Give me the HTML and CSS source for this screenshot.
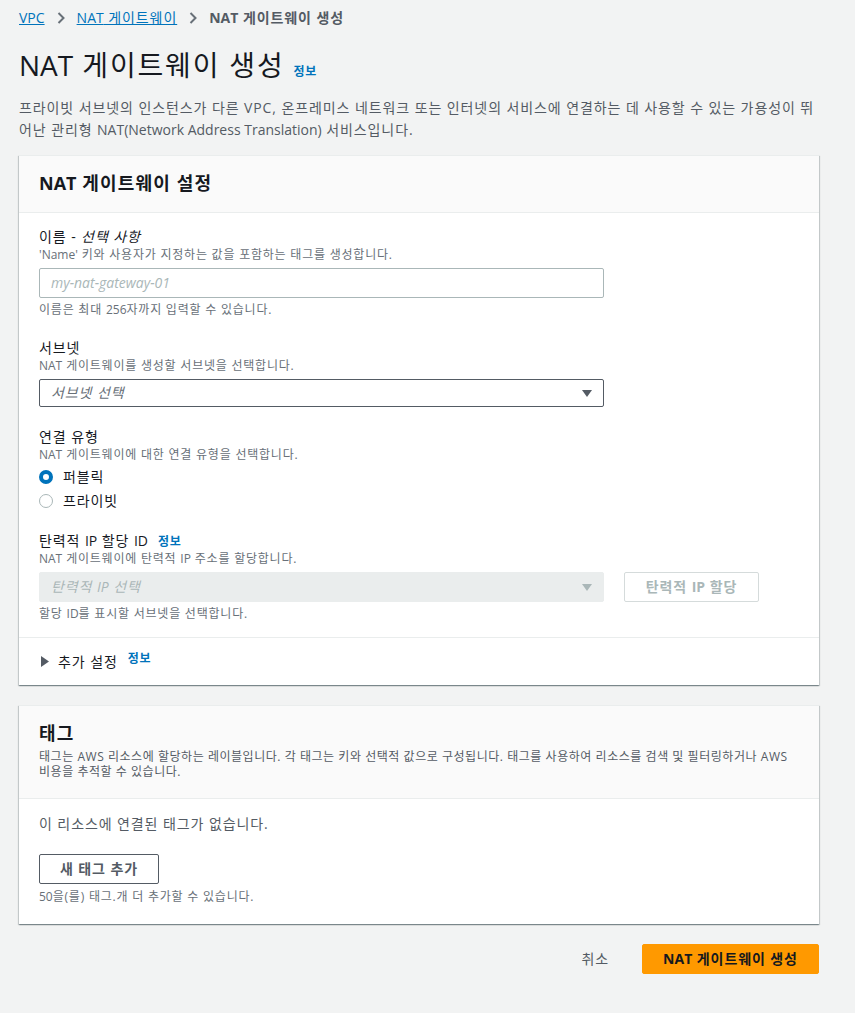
FILE: index.html
```html
<!DOCTYPE html>
<html lang="ko">
<head>
<meta charset="utf-8">
<title>NAT 게이트웨이 생성</title>
<link rel="stylesheet" href="styles.css">
</head>
<body>
<div class="page">
  <nav class="breadcrumb">
    <a class="crumb-link" href="#"><span class="en">VPC</span></a>
    <svg class="crumb-sep" width="8" height="12" viewBox="0 0 8 12"><polyline points="1.5,1 6.5,6 1.5,11" fill="none" stroke="#687078" stroke-width="2"/></svg>
    <a class="crumb-link" href="#"><span class="en">NAT</span> 게이트웨이</a>
    <svg class="crumb-sep" width="8" height="12" viewBox="0 0 8 12"><polyline points="1.5,1 6.5,6 1.5,11" fill="none" stroke="#687078" stroke-width="2"/></svg>
    <span class="crumb-current"><span class="en">NAT</span> 게이트웨이 생성</span>
  </nav>

  <header class="page-header">
    <h1 class="page-title"><span class="en">NAT</span> 게이트웨이 생성<a class="info-link info-title" href="#">정보</a></h1>
    <p class="page-desc"><span class="desc-run">프라이빗 서브넷의 인스턴스가 다른 VPC, 온프레미스 네트워크 또는 인터넷의 서비스에 연결하는 데 사용할 수 있는 가용성이 뛰</span><span class="desc-run">어난 관리형 </span><span class="en">NAT(Network Address Translation)</span><span class="desc-run"> 서비스입니다.</span></p>
  </header>

  <section class="card">
    <div class="card-header">
      <h2 class="card-title"><span class="en">NAT</span> 게이트웨이 설정</h2>
    </div>
    <div class="card-body settings-body">
      <div class="field">
        <div class="label">이름 - <i>선택 사항</i></div>
        <div class="desc"><span class="en">'Name'</span> 키와 사용자가 지정하는 값을 포함하는 태그를 생성합니다.</div>
        <div class="input"><span class="placeholder en">my-nat-gateway-01</span></div>
        <div class="hint">이름은 최대 <span class="en">256</span>자까지 입력할 수 있습니다.</div>
      </div>

      <div class="field">
        <div class="label">서브넷</div>
        <div class="desc"><span class="en">NAT</span> 게이트웨이를 생성할 서브넷을 선택합니다.</div>
        <div class="select select-subnet">
          <span class="placeholder">서브넷 선택</span>
          <svg class="caret" width="10" height="7" viewBox="0 0 10 7"><polygon points="0,0 10,0 5,7" fill="#545b64"/></svg>
        </div>
      </div>

      <div class="field">
        <div class="label">연결 유형</div>
        <div class="desc"><span class="en">NAT</span> 게이트웨이에 대한 연결 유형을 선택합니다.</div>
        <div class="radio-group">
          <div class="radio-row"><span class="radio radio-on"></span><span class="radio-label">퍼블릭</span></div>
          <div class="radio-row"><span class="radio"></span><span class="radio-label">프라이빗</span></div>
        </div>
      </div>

      <div class="field">
        <div class="label">탄력적 <span class="en">IP</span> 할당 <span class="en">ID</span><a class="info-link info-label" href="#">정보</a></div>
        <div class="desc"><span class="en">NAT</span> 게이트웨이에 탄력적 <span class="en">IP</span> 주소를 할당합니다.</div>
        <div class="eip-row">
          <div class="select select-disabled">
            <span class="placeholder">탄력적 <span class="en">IP</span> 선택</span>
            <svg class="caret" width="10" height="7" viewBox="0 0 10 7"><polygon points="0,0 10,0 5,7" fill="#aab7b8"/></svg>
          </div>
          <button class="btn btn-disabled" type="button">탄력적 <span class="en">IP</span> 할당</button>
        </div>
        <div class="hint">할당 <span class="en">ID</span>를 표시할 서브넷을 선택합니다.</div>
      </div>
    </div>
    <div class="expander">
      <svg class="expander-icon" width="8" height="11" viewBox="0 0 8 11"><polygon points="0,0 8,5.5 0,11" fill="#545b64"/></svg>
      <span class="expander-title">추가 설정</span>
      <a class="info-link info-expander" href="#">정보</a>
    </div>
  </section>

  <section class="card card-tags">
    <div class="card-header tags-header">
      <h2 class="card-title">태그</h2>
      <p class="header-desc">태그는 AWS 리소스에 할당하는 레이블입니다. 각 태그는 키와 선택적 값으로 구성됩니다. 태그를 사용하여 리소스를 검색 및 필터링하거나 AWS 비용을 추적할 수 있습니다.</p>
    </div>
    <div class="card-body tags-body">
      <p class="empty-text">이 리소스에 연결된 태그가 없습니다.</p>
      <button class="btn btn-normal" type="button">새 태그 추가</button>
      <div class="hint hint-tags"><span class="en">50</span>을(를) 태그.개 더 추가할 수 있습니다.</div>
    </div>
  </section>

  <div class="actions">
    <button class="btn btn-link" type="button">취소</button>
    <button class="btn btn-primary" type="button"><span class="en">NAT</span> 게이트웨이 생성</button>
  </div>
</div>
</body>
</html>
```

FILE: styles.css
```css
* {
  box-sizing: border-box;
  letter-spacing: 0.065em;
}
.en { letter-spacing: 0; }

body {
  margin: 0;
  background: #f2f3f3;
  color: #16191f;
  font-family: "Open Sans", "Noto Sans CJK KR", sans-serif;
  font-size: 14px;
  line-height: 20px;
}

.page {
  width: 800px;
  margin-left: 19px;
  padding-top: 8px;
  padding-bottom: 38px;
}

/* breadcrumb */
.breadcrumb {
  display: flex;
  align-items: center;
  gap: 12px;
  height: 20px;
  font-size: 14px;
  line-height: 20px;
}
.crumb-link {
  color: #0073bb;
  text-decoration: underline;
}
.crumb-sep { display: block; }
.crumb-current {
  color: #545b64;
  font-weight: 700;
}

/* header */
.page-header { margin-top: 19px; }
.page-title {
  margin: 0;
  font-size: 28px;
  line-height: 36px;
  font-weight: 400;
  color: #16191f;
}
.info-link {
  color: #0073bb;
  font-size: 12px;
  line-height: 16px;
  font-weight: 700;
  text-decoration: none;
}
.info-title { margin-left: 9px; }
.page-desc {
  margin: 14px 0 0;
  color: #545b64;
  font-size: 14px;
  line-height: 22px;
}

/* cards */
.card {
  margin-top: 14px;
  background: #ffffff;
  border-top: 1px solid #eaeded;
  box-shadow: 0 1px 1px 0 rgba(0, 28, 36, 0.3), 1px 1px 1px 0 rgba(0, 28, 36, 0.15), -1px 1px 1px 0 rgba(0, 28, 36, 0.15);
}
.card-tags { margin-top: 20px; }
.card-header {
  background: #fafafa;
  border-bottom: 1px solid #eaeded;
  padding: 15px 20px 17px;
}
.card-title {
  margin: 0;
  font-size: 18px;
  line-height: 24px;
  font-weight: 700;
  color: #16191f;
}
.card-body { padding: 0 20px; }
.settings-body {
  padding-top: 14px;
  padding-bottom: 15px;
  border-bottom: 1px solid #eaeded;
}

/* fields */
.field { display: flex; flex-direction: column; align-items: flex-start; }
.field + .field { margin-top: 20px; }
.label {
  font-size: 14px;
  line-height: 20px;
  color: #16191f;
}
.label i { font-style: italic; }
.info-label { margin-left: 10px; }
.desc, .hint {
  font-size: 12px;
  line-height: 16px;
  color: #687078;
}
.hint { margin-top: 4px; }

.input, .select {
  margin-top: 5px;
  width: 565px;
  height: 30px;
  display: flex;
  align-items: center;
  padding: 0 11px;
  border: 1px solid #aab7b8;
  border-radius: 2px;
  background: #ffffff;
}
.placeholder {
  color: #aab7b8;
  font-style: italic;
  flex: 1;
}
.select { border-color: #545b64; }
.select .placeholder { color: #687078; }
.select-subnet { height: 28px; }
.caret { display: block; }
.select-disabled {
  margin-top: 0;
  background: #eaeded;
  border-color: #eaeded;
}
.select-disabled .placeholder { color: #aab7b8; }

.radio-group {
  margin-top: 4px;
  display: flex;
  flex-direction: column;
  gap: 4px;
}
.radio-row {
  display: flex;
  align-items: center;
  gap: 10px;
  height: 20px;
}
.radio {
  width: 14px;
  height: 14px;
  border-radius: 50%;
  border: 1px solid #aab7b8;
  background: #ffffff;
}
.radio-on { border: 4px solid #0073bb; }
.radio-label { color: #16191f; }

.eip-row {
  margin-top: 5px;
  display: flex;
  align-items: center;
  gap: 20px;
}

/* buttons */
.btn {
  font-family: inherit;
  font-size: 14px;
  line-height: 20px;
  height: 30px;
  padding: 0 20px;
  border-radius: 2px;
  font-weight: 700;
  cursor: pointer;
}
.btn-disabled {
  background: #ffffff;
  border: 1px solid #d5dbdb;
  color: #aab7b8;
  width: 135px;
  padding: 0;
}
.btn-normal {
  background: #ffffff;
  border: 1px solid #545b64;
  color: #545b64;
  width: 120px;
  padding: 0;
  margin-top: 20px;
}
.btn-link {
  background: transparent;
  border: 1px solid transparent;
  color: #545b64;
  font-weight: 400;
}
.btn-primary {
  background: #ff9900;
  border: 1px solid #ff9900;
  color: #16191f;
  width: 177px;
  padding: 0;
}

/* expander */
.expander {
  display: flex;
  align-items: center;
  padding: 13px 20px 13px 22px;
  height: 47px;
}
.expander-icon { display: block; margin-right: 9px; }
.expander-title { color: #16191f; }
.info-expander { margin-left: 10px; position: relative; top: -3px; }

/* tags */
.tags-header { padding: 15px 20px 19px; }
.header-desc {
  margin: 4px 0 0;
  font-size: 12px;
  line-height: 15px;
  color: #545b64;
  letter-spacing: 0.045em;
}
.tags-body {
  padding-top: 15px;
  padding-bottom: 19px;
  display: flex;
  flex-direction: column;
  align-items: flex-start;
}
.empty-text {
  margin: 0;
  color: #545b64;
}
.hint-tags { margin-top: 5px; }

/* actions */
.actions {
  margin-top: 20px;
  display: flex;
  justify-content: flex-end;
  align-items: center;
  gap: 12px;
}
```
